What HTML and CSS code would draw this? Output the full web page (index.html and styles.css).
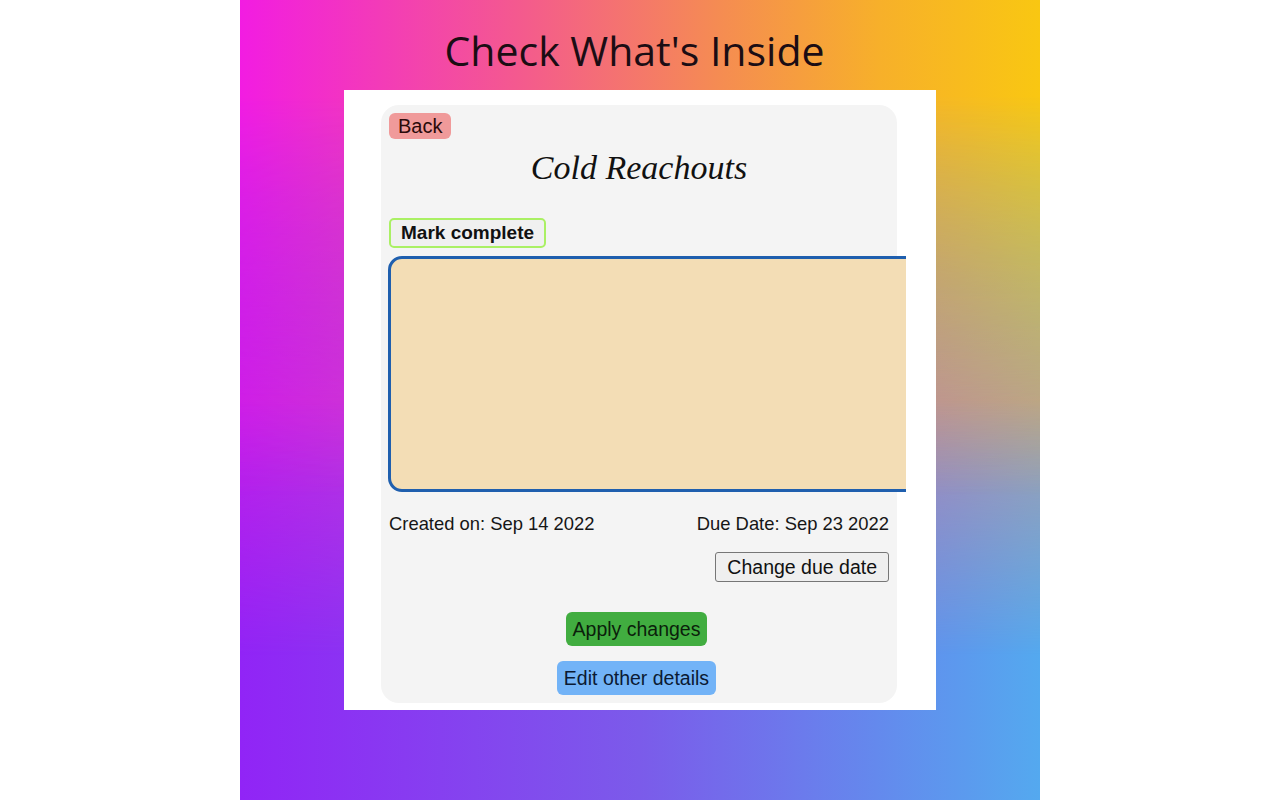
FILE: index.html
```html
<!DOCTYPE html>
<html lang="en">
<head>
<meta charset="utf-8">
<title>Check What's Inside</title>
<link rel="stylesheet" href="styles.css">
</head>
<body>
<main class="stage">
  <div class="bg bg-bottom"></div>
  <div class="bg bg-middle"></div>
  <div class="bg bg-top"></div>
  <div class="content">
    <header class="headline">
      <h1>Check What's Inside</h1>
    </header>
    <section class="sheet">
      <div class="card">
        <div class="top-row">
          <button class="btn btn-back">Back</button>
        </div>
        <h2 class="task-title">Cold Reachouts</h2>
        <div class="mark-row">
          <button class="btn btn-mark">Mark complete</button>
        </div>
        <div class="note-clip">
          <div class="note"></div>
        </div>
        <div class="dates">
          <span>Created on: Sep 14 2022</span>
          <span>Due Date: Sep 23 2022</span>
        </div>
        <div class="due-row">
          <button class="btn btn-due">Change due date</button>
        </div>
        <div class="actions">
          <button class="btn btn-apply">Apply changes</button>
          <button class="btn btn-edit">Edit other details</button>
        </div>
      </div>
    </section>
  </div>
</main>
</body>
</html>
```

FILE: styles.css
```css
* { box-sizing: border-box; }

html, body {
  margin: 0;
  padding: 0;
  background: #ffffff;
}

body {
  display: flex;
  justify-content: center;
  font-family: "Liberation Sans", Arial, sans-serif;
}

.stage {
  width: 800px;
  height: 800px;
  display: grid;
  overflow: hidden;
  isolation: isolate;
}

.stage > * {
  grid-area: 1 / 1;
}

.bg-bottom {
  background: linear-gradient(to right, #9124f6 0%, #7b5bea 50%, #54a9ef 100%);
}

.bg-middle {
  background: linear-gradient(to right, #c41fe8 0%, #b85ec8 50%, #a99ca8 100%);
  -webkit-mask-image: linear-gradient(to bottom, rgba(0,0,0,0) 18%, #000 50%, rgba(0,0,0,0) 82%);
  mask-image: linear-gradient(to bottom, rgba(0,0,0,0) 18%, #000 50%, rgba(0,0,0,0) 82%);
}

.bg-top {
  background: linear-gradient(to right, #f21ce2 0%, #f45a8e 35%, #f58c52 60%, #f7b02a 80%, #f9c712 100%);
  -webkit-mask-image: linear-gradient(to bottom, #000 0%, #000 12%, rgba(0,0,0,0) 62%);
  mask-image: linear-gradient(to bottom, #000 0%, #000 12%, rgba(0,0,0,0) 62%);
}

.content {
  position: relative;
  z-index: 1;
  display: flex;
  flex-direction: column;
  align-items: center;
}

.headline {
  height: 90px;
  display: flex;
  align-items: center;
  justify-content: center;
  padding-top: 9px;
  padding-right: 11px;
}

.headline h1 {
  margin: 0;
  font-family: "Open Sans", "Noto Sans", sans-serif;
  font-weight: 400;
  font-size: 41px;
  line-height: 54px;
  color: #1b0d14;
}

.sheet {
  width: 592px;
  height: 620px;
  background: #ffffff;
  padding: 15px 39px 7px 37px;
}

.card {
  width: 516px;
  height: 598px;
  background: #f4f4f4;
  border-radius: 18px;
  padding: 8px 8px 8px 8px;
  display: flex;
  flex-direction: column;
}

.btn {
  font-family: "Liberation Sans", Arial, sans-serif;
  border: none;
  margin: 0;
  cursor: pointer;
  color: #111;
}

.top-row, .mark-row {
  display: flex;
}

.btn-back {
  height: 26px;
  padding: 0 9px;
  font-size: 20px;
  line-height: 26px;
  background: #f09a9a;
  border-radius: 6px;
  color: #2a0a0a;
}

.task-title {
  margin: 9px 0 30px 0;
  height: 40px;
  text-align: center;
  font-family: "Liberation Serif", "Times New Roman", serif;
  font-style: italic;
  font-weight: 400;
  font-size: 34px;
  line-height: 40px;
  color: #111;
}

.btn-mark {
  height: 30px;
  padding: 0 10px;
  font-size: 19px;
  font-weight: 700;
  line-height: 26px;
  background: #f0f0f0;
  border: 2px solid #aaf064;
  border-radius: 5px;
}

.note-clip {
  margin-top: 8px;
  margin-left: -1px;
  width: 518px;
  height: 236px;
  overflow: hidden;
}

.note {
  width: 560px;
  height: 236px;
  background: #f3ddb5;
  border: 3px solid #1f5fae;
  border-radius: 14px;
}

.dates {
  margin-top: 21px;
  height: 22px;
  display: flex;
  justify-content: space-between;
  font-size: 18.4px;
  line-height: 22px;
  color: #161616;
}

.due-row {
  margin-top: 17px;
  display: flex;
  justify-content: flex-end;
}

.btn-due {
  height: 30px;
  padding: 0 11px;
  font-size: 19.5px;
  line-height: 28px;
  background: #efefef;
  border: 1px solid #767676;
  border-radius: 3px;
}

.actions {
  margin-top: 30px;
  display: flex;
  flex-direction: column;
  align-items: center;
  gap: 15px;
  padding-right: 5px;
}

.btn-apply,
.btn-edit {
  height: 34px;
  padding: 0 6.5px;
  font-size: 19.5px;
  line-height: 34px;
  border-radius: 6px;
}

.btn-apply {
  background: #41ad40;
  color: #0b1f0b;
}

.btn-edit {
  background: #72b3f7;
  color: #0b1a33;
}
```
